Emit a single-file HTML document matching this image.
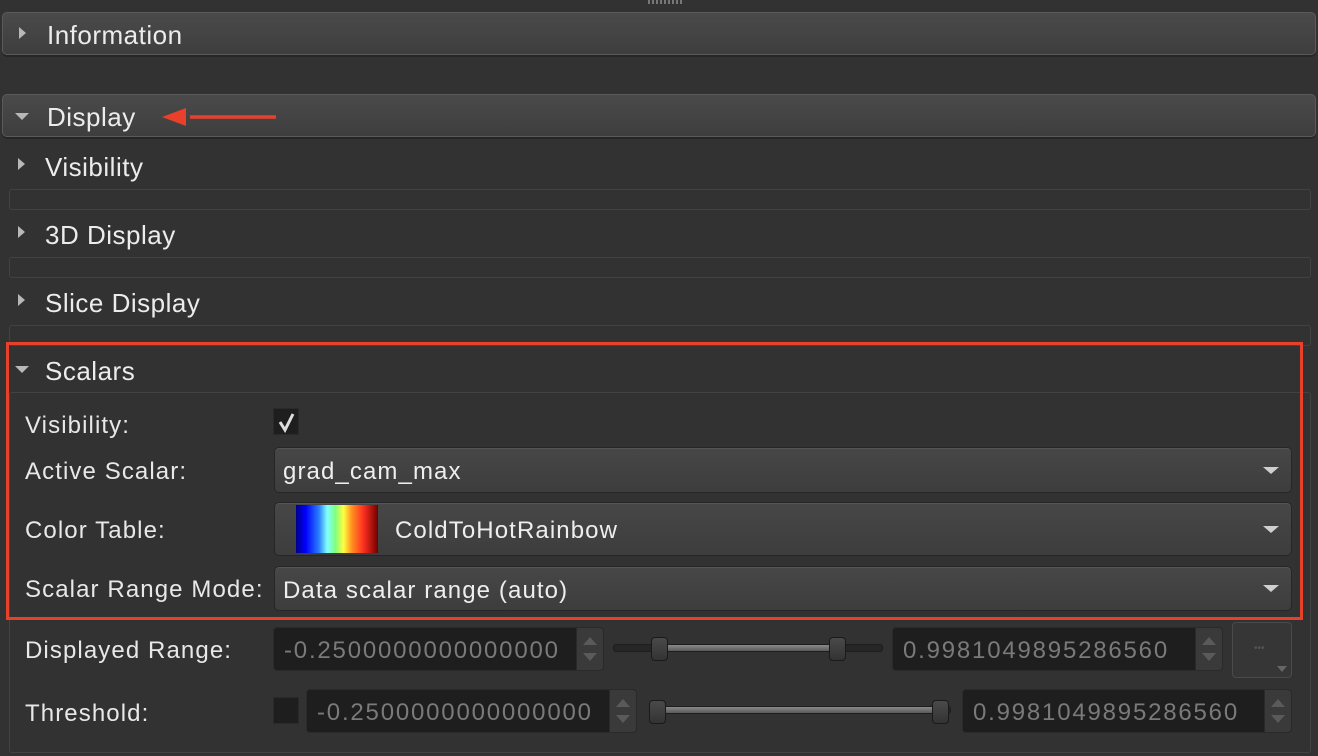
<!DOCTYPE html>
<html><head><meta charset="utf-8"><style>
*{box-sizing:border-box;margin:0;padding:0}
body{width:1318px;height:756px;background:#323232;font-family:"Liberation Sans",sans-serif;color:#e8e8e8;position:relative;overflow:hidden}
.a{position:absolute}
.hdr{position:absolute;left:2px;width:1314px;height:43px;border:1px solid #5a5a5a;border-radius:5px;background:linear-gradient(#4a4a4a,#3e3e3e);box-shadow:0 2px 0 #262626}
.t{position:absolute;font-size:26px;letter-spacing:0.5px;line-height:28px;color:#ececec}
.l{position:absolute;font-size:24px;letter-spacing:1.1px;line-height:26px;color:#e8e8e8;left:25px}
.tri-r{position:absolute;width:0;height:0;border-top:6px solid transparent;border-bottom:6px solid transparent;border-left:7px solid #b8b8b8}
.tri-d{position:absolute;width:0;height:0;border-left:7px solid transparent;border-right:7px solid transparent;border-top:7px solid #b8b8b8}
.gb{position:absolute;left:9px;width:1302px;border:1px solid #424242;border-radius:3px}
.combo{position:absolute;left:274px;width:1018px;border:1px solid #262626;border-radius:5px;background:linear-gradient(#474747,#3d3d3d);box-shadow:inset 0 1px 0 #555}
.combo .tx{position:absolute;left:8px;font-size:24px;letter-spacing:1.1px;color:#eee}
.combo .dd{position:absolute;right:12px;width:0;height:0;border-left:8px solid transparent;border-right:8px solid transparent;border-top:7px solid #cfcfcf}
.spin{position:absolute;height:44px;background:#1e1e1e;border:1px solid #2a2a2a;border-radius:4px;overflow:hidden}
.spin .v{position:absolute;left:10px;top:9px;font-size:24px;letter-spacing:1.8px;color:#7a7a7a;white-space:nowrap}
.spin .b{position:absolute;right:0;top:0;width:27px;height:100%;background:#3a3a3a;border-left:1px solid #2a2a2a}
.spin .b:before{content:"";position:absolute;left:6px;top:9px;border-left:7px solid transparent;border-right:7px solid transparent;border-bottom:8px solid #5a5a5a}
.spin .b:after{content:"";position:absolute;left:6px;bottom:9px;border-left:7px solid transparent;border-right:7px solid transparent;border-top:8px solid #5a5a5a}
.track{position:absolute;height:8px;background:#262626;border:1px solid #1e1e1e;border-radius:3px}
.fill{position:absolute;height:6px;background:linear-gradient(#8a8a8a,#5a5a5a)}
.h{position:absolute;width:17px;height:24px;background:linear-gradient(#4a4a4a,#333);border:1px solid #1a1a1a;border-radius:4px}
.cb{position:absolute;width:26px;height:27px;background:#1e1e1e;border:1px solid #2a2a2a}
</style></head><body>
<div class="a" style="left:648px;top:0;width:34px;height:4px;background:repeating-linear-gradient(90deg,#777 0 2px,transparent 2px 4px)"></div>

<div class="hdr" style="top:12px"></div>
<div class="tri-r" style="left:19px;top:27px"></div>
<div class="t" style="left:47px;top:21px">Information</div>

<div class="hdr" style="top:94px"></div>
<div class="tri-d" style="left:15px;top:113px"></div>
<div class="t" style="left:47px;top:103px">Display</div>
<svg class="a" style="left:160px;top:105px" width="118" height="24"><path d="M30 12H116" stroke="#e8402a" stroke-width="3.5"/><path d="M2 12L26 3V21Z" fill="#e8402a"/></svg>

<div class="tri-r" style="left:18px;top:158px"></div>
<div class="t" style="left:45px;top:153px">Visibility</div>
<div class="gb" style="top:189px;height:21px"></div>
<div class="tri-r" style="left:18px;top:226px"></div>
<div class="t" style="left:45px;top:221px">3D Display</div>
<div class="gb" style="top:257px;height:21px"></div>
<div class="tri-r" style="left:18px;top:294px"></div>
<div class="t" style="left:45px;top:289px">Slice Display</div>
<div class="gb" style="top:325px;height:21px"></div>

<div class="tri-d" style="left:15px;top:366px"></div>
<div class="t" style="left:45px;top:357px">Scalars</div>
<div class="gb" style="top:392px;height:361px"></div>

<div class="l" style="top:413px">Visibility:</div>
<div class="cb" style="left:273px;top:408px"></div>
<svg class="a" style="left:277px;top:411px" width="20" height="22"><path d="M3 11L8 19L16 3" fill="none" stroke="#ddd" stroke-width="3"/></svg>

<div class="l" style="top:459px">Active Scalar:</div>
<div class="combo" style="top:447px;height:46px"><div class="tx" style="top:10px">grad_cam_max</div><div class="dd" style="top:19px"></div></div>

<div class="l" style="top:518px">Color Table:</div>
<div class="combo" style="top:502px;height:54px"><div class="a" style="left:21px;top:2px;width:82px;height:48px;background:linear-gradient(90deg,#00008a,#0000ff 12%,#2a7fff 28%,#80ffff 38%,#80ff80 48%,#ffff40 58%,#ff9020 68%,#ff3020 82%,#700000)"></div><div class="tx" style="left:120px;top:14px">ColdToHotRainbow</div><div class="dd" style="top:23px"></div></div>

<div class="l" style="top:577px">Scalar Range Mode:</div>
<div class="combo" style="top:566px;height:45px"><div class="tx" style="top:10px">Data scalar range (auto)</div><div class="dd" style="top:18px"></div></div>

<div class="a" style="left:6px;top:342px;width:1297px;height:278px;border:3px solid #e8402a"></div>

<div class="l" style="top:638px">Displayed Range:</div>
<div class="spin" style="left:273px;top:627px;width:331px"><div class="v">-0.2500000000000000</div><div class="b"></div></div>
<div class="track" style="left:613px;top:644px;width:270px"></div>
<div class="fill" style="left:668px;top:645px;width:170px"></div>
<div class="h" style="left:651px;top:637px"></div>
<div class="h" style="left:829px;top:637px"></div>
<div class="spin" style="left:892px;top:627px;width:331px"><div class="v">0.9981049895286560</div><div class="b"></div></div>
<div class="a" style="left:1232px;top:622px;width:60px;height:56px;border:1px solid #4a4a4a;border-radius:4px;background:#363636"><div class="a" style="left:21px;top:20px;font-size:10px;color:#555">•••</div><div class="a" style="right:4px;bottom:5px;border-left:5px solid transparent;border-right:5px solid transparent;border-top:6px solid #666"></div></div>

<div class="l" style="top:701px">Threshold:</div>
<div class="cb" style="left:273px;top:697px"></div>
<div class="spin" style="left:306px;top:689px;width:331px"><div class="v">-0.2500000000000000</div><div class="b"></div></div>
<div class="track" style="left:649px;top:706px;width:302px"></div>
<div class="fill" style="left:666px;top:707px;width:275px"></div>
<div class="h" style="left:649px;top:700px"></div>
<div class="h" style="left:932px;top:700px"></div>
<div class="spin" style="left:962px;top:689px;width:330px"><div class="v">0.9981049895286560</div><div class="b"></div></div>
</body></html>
